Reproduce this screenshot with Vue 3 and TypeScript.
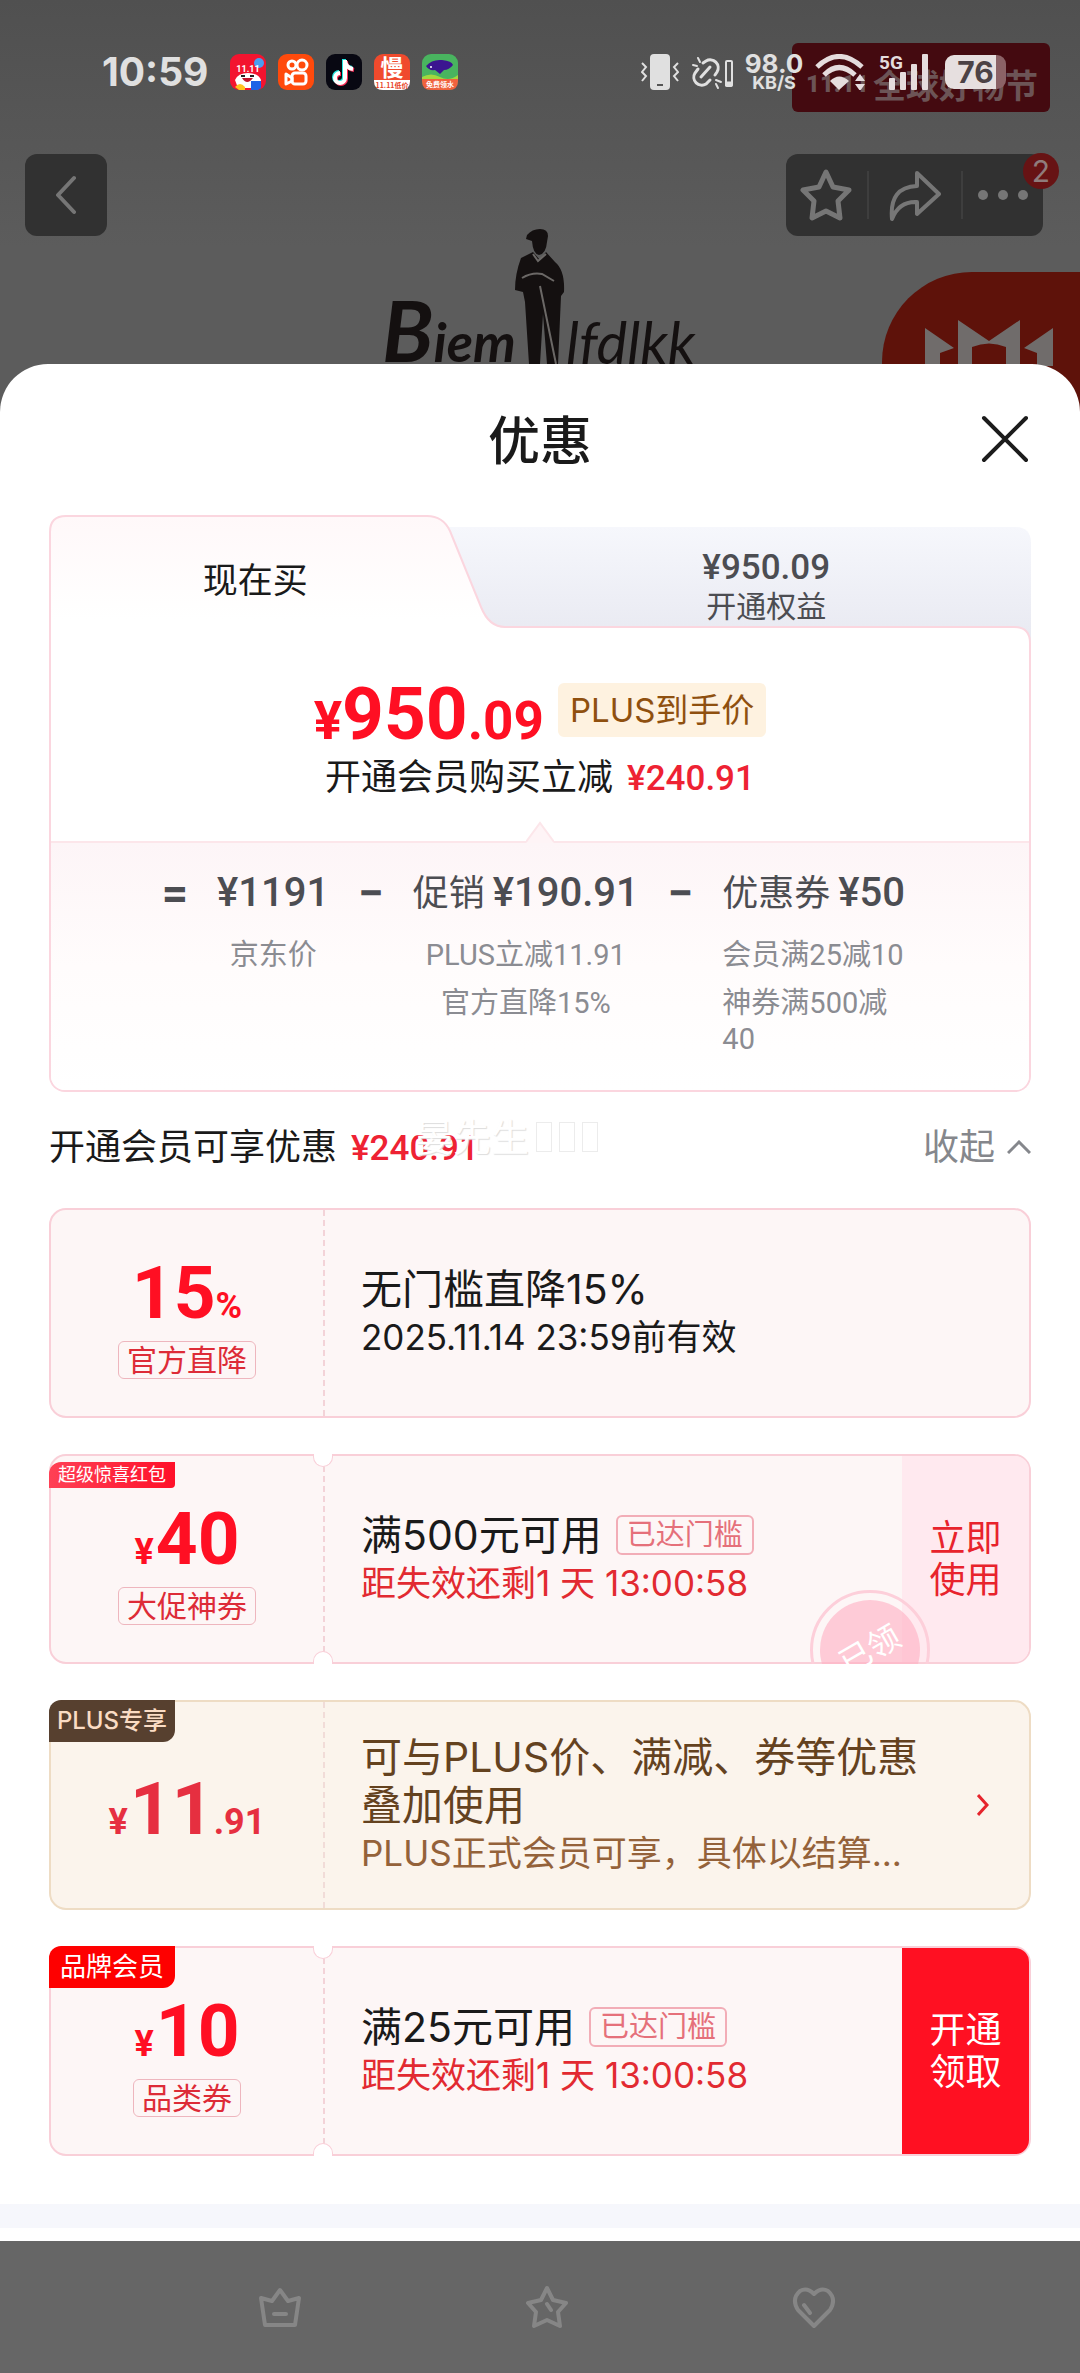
<script setup lang="ts">
import { ref } from 'vue'

interface Coupon {
  id: string
  theme: 'pink' | 'gold'
  corner?: { text: string; kind: 'gift' | 'plus' | 'brand' }
  prefix?: string
  amount: string
  suffix?: string
  tag?: string
  title: string
  reached?: boolean
  note: string
  noteRed?: boolean
  notched?: boolean
  action?: { lines: [string, string]; solid: boolean }
  claimed?: boolean
  arrow?: boolean
}

interface Term {
  label?: string
  price: string
  details: string[]
}

const tab = ref<'now' | 'member'>('now')

const terms: Term[] = [
  { price: '¥1191', details: ['京东价'] },
  { label: '促销', price: '¥190.91', details: ['PLUS立减11.91', '官方直降15%'] },
  { label: '优惠券', price: '¥50', details: ['会员满25减10', '神券满500减40'] },
]

const coupons: Coupon[] = [
  {
    id: 'direct',
    theme: 'pink',
    amount: '15',
    suffix: '%',
    tag: '官方直降',
    title: '无门槛直降15%',
    note: '2025.11.14 23:59前有效',
  },
  {
    id: 'super',
    theme: 'pink',
    corner: { text: '超级惊喜红包', kind: 'gift' },
    prefix: '¥',
    amount: '40',
    tag: '大促神券',
    title: '满500元可用',
    reached: true,
    note: '距失效还剩1 天 13:00:58',
    noteRed: true,
    notched: true,
    action: { lines: ['立即', '使用'], solid: false },
    claimed: true,
  },
  {
    id: 'plus',
    theme: 'gold',
    corner: { text: 'PLUS专享', kind: 'plus' },
    prefix: '¥',
    amount: '11',
    suffix: '.91',
    title: '可与PLUS价、满减、券等优惠叠加使用',
    note: 'PLUS正式会员可享，具体以结算...',
    arrow: true,
  },
  {
    id: 'brand',
    theme: 'pink',
    corner: { text: '品牌会员', kind: 'brand' },
    prefix: '¥',
    amount: '10',
    tag: '品类券',
    title: '满25元可用',
    reached: true,
    note: '距失效还剩1 天 13:00:58',
    noteRed: true,
    notched: true,
    action: { lines: ['开通', '领取'], solid: true },
  },
]
</script>

<template>
  <div class="page" lang="zh-CN">
    <header class="hero">
      <div class="banner"><b>11.11</b><span>全球好物节</span></div>
      <div class="blob">
        <svg width="128" height="46" viewBox="0 0 128 46" fill="#706c6b" aria-hidden="true">
          <path d="M0 8 29 28 15 33V46H0Z" />
          <path d="M33 0 64 21 95 0V46H81V27Q64 20 47 27V46H33Z" />
          <path d="M128 8 99 28 112 33V46H128Z" />
        </svg>
      </div>

      <div class="status">
        <span class="clock">10:59</span>
        <div class="apps">
          <svg width="36" height="36" viewBox="0 0 36 36" aria-hidden="true">
            <rect width="36" height="36" rx="9" fill="#f3142f" />
            <circle cx="29" cy="9" r="5" fill="#4a9df0" />
            <path d="M5 26Q8 19 18 19T31 26L29 34H8Z" fill="#fff" />
            <path d="M12 24q5 8 11 0Z" fill="#c0122a" />
            <path d="M11 22h4M20 22h4" stroke="#222" stroke-width="2" />
            <path d="M5 33q5-6 10 0v3H9Z" fill="#ffc31f" />
            <path d="M21 27h10v7l-3 2h-7Z" fill="#1f63e6" />
            <text x="18" y="18" text-anchor="middle" font-family="Roboto" font-weight="700" font-size="9" fill="#fff">11.11</text>
          </svg>
          <svg width="36" height="36" viewBox="0 0 36 36" fill="none" stroke="#fff" stroke-width="3" stroke-linejoin="round" aria-hidden="true">
            <rect width="36" height="36" rx="9" fill="#ff4a0c" stroke="none" />
            <circle cx="14" cy="11" r="4" />
            <circle cx="24" cy="11" r="5" />
            <rect x="14" y="19" width="14" height="11" rx="3" />
            <path d="M14 24 8 20v10l6-3Z" />
          </svg>
          <svg width="36" height="36" viewBox="0 0 36 36" fill="none" stroke-width="4" aria-hidden="true">
            <rect width="36" height="36" rx="9" fill="#080812" />
            <path d="M18 5v18a5 5 0 1 1-5-5M18 6q1 7 8 8" stroke="#25e6e0" />
            <path d="M20 7v18a5 5 0 1 1-5-5M20 8q1 7 8 8" stroke="#fb2c57" />
            <path d="M19 6v18a5 5 0 1 1-5-5M19 7q1 7 8 8" stroke="#fff" />
          </svg>
          <svg width="36" height="36" viewBox="0 0 36 36" aria-hidden="true">
            <rect width="36" height="36" rx="9" fill="#f04a2d" />
            <path d="M0 26h36v1q0 9-9 9H9q-9 0-9-9Z" fill="#fff" />
            <text x="18" y="22" text-anchor="middle" font-family="Noto Sans CJK SC" font-weight="700" font-size="23" fill="#fff">慢</text>
            <text x="18" y="34" text-anchor="middle" font-family="Noto Sans CJK SC" font-weight="700" font-size="7" fill="#e8431f">11.11低价</text>
          </svg>
          <svg width="36" height="36" viewBox="0 0 36 36" aria-hidden="true">
            <rect width="36" height="36" rx="9" fill="#49b45f" />
            <path d="M0 23q9-5 18 0t18-2v6H0Z" fill="#a3d83e" />
            <path d="M0 25h36v2q0 9-9 9H9q-9 0-9-9Z" fill="#f0623e" />
            <path d="M4 12Q10 5 20 6T31 11Q27 16 22 16L18 20 13 16Q7 17 4 12Z" fill="#3b1590" />
            <circle cx="9" cy="13" r="1" fill="#fff" />
            <text x="18" y="33" text-anchor="middle" font-family="Noto Sans CJK SC" font-weight="700" font-size="7" fill="#fff">免费领水</text>
          </svg>
        </div>

        <div class="signals">
          <svg width="38" height="36" viewBox="0 0 38 36" fill="none" stroke="#e0e0e0" stroke-width="2" aria-hidden="true">
            <rect x="9" y="0" width="20" height="36" rx="4" fill="#e0e0e0" stroke="none" />
            <path d="M16 31h6" stroke="#555" />
            <path d="M1 9l4 4-4 5 4 4-4 5M37 9l-4 4 4 5-4 4 4 5" />
          </svg>
          <svg class="link" width="42" height="36" viewBox="0 0 42 36" fill="none" stroke="#e0e0e0" stroke-width="3" stroke-linecap="round" aria-hidden="true">
            <path d="M12 9l3-2a8 8 0 0 1 11 11l-2 3M7 15l-3 4a8 8 0 0 0 11 11l4-4M10 23 19 13" />
            <path d="M2 11l4 1M7 4l2 4M25 30l2 4M25 26l5 2" stroke-width="2" />
            <rect x="35" y="7" width="6" height="25" rx="1" stroke-width="2" />
            <path d="M35 28h6v4h-6Z" fill="#e0e0e0" stroke-width="1" />
          </svg>
          <div class="speed"><b>98.0</b><b class="unit">KB/S</b></div>
          <svg class="wifi" width="52" height="36" viewBox="0 0 52 36" fill="none" stroke="#e5dcdd" stroke-width="5" aria-hidden="true">
            <path d="M2 13Q24-8 47 13M9 21Q24 6 40 21" />
            <path d="M15 27Q24 18 34 27L24 36Z" fill="#e5dcdd" stroke="none" />
            <path d="M45 20l5 7H40ZM45 37l5-7H40Z" fill="#e5dcdd" stroke="none" />
          </svg>
          <svg class="cell" width="50" height="38" viewBox="0 0 50 38" fill="#e5dcdd" aria-hidden="true">
            <text x="0" y="16" font-family="Roboto" font-weight="700" font-size="19">5G</text>
            <rect x="10" y="25" width="6" height="12" rx="1" />
            <rect x="21" y="19" width="6" height="18" rx="1" />
            <rect x="32" y="11" width="6" height="26" rx="1" />
            <rect x="43" y="1" width="6" height="36" rx="1" />
          </svg>
          <div class="battery"><b>76</b></div>
        </div>
      </div>

      <div class="toolbar">
        <button class="tool back" type="button" aria-label="返回">
          <svg width="20" height="40" viewBox="0 0 20 40" fill="none" stroke="#767676" stroke-width="4" stroke-linecap="round" stroke-linejoin="round"><path d="M18 3 2 20 18 37" /></svg>
        </button>
        <div class="tool group">
          <button type="button" aria-label="收藏">
            <svg width="52" height="54" viewBox="0 0 52 54" fill="none" stroke="#767676" stroke-width="5" stroke-linejoin="round"><path d="M26 4 33 19 49 22 38 33 40 50 26 43 12 50 14 33 3 22 19 19Z" /></svg>
          </button>
          <i></i>
          <button class="share" type="button" aria-label="分享">
            <svg width="52" height="52" viewBox="0 0 52 52" fill="none" stroke="#767676" stroke-width="4" stroke-linejoin="round"><path d="M28 4 50 25 28 45V33Q10 32 3 50 0 18 28 17Z" /></svg>
          </button>
          <i></i>
          <button type="button" aria-label="更多">
            <svg width="52" height="12" viewBox="0 0 52 12" fill="#767676"><circle cx="6" cy="6" r="5" /><circle cx="26" cy="6" r="5" /><circle cx="46" cy="6" r="5" /></svg>
          </button>
          <span class="count">2</span>
        </div>
      </div>

      <div class="brand-logo">
        <span class="word"><em>B</em>iem</span>
        <svg width="52" height="136" viewBox="0 0 52 136" fill="#141010" aria-hidden="true">
          <path d="M13 7Q18 1 26 1q8 0 8 7l-1 6q-1 12-8 13-6-1-7-14l-6-2Z" />
          <path d="M19 24 7 30Q1 46 1 62l8 2 2 10 4 62h11l3-50 4 50h11l3-68 3-4q1-22-9-30L32 24l-6 8Z" />
          <path d="M8 50q10-6 20-4l12 7M26 58l16 78M19 26l5 7 8-7" fill="none" stroke="#6b6866" stroke-width="2" />
        </svg>
        <span class="word thin">lfdlkk</span>
      </div>
    </header>

    <main class="sheet">
      <div class="sheet-head">
        <h1>优惠</h1>
        <button class="close" type="button" aria-label="关闭">
          <svg width="48" height="48" viewBox="0 0 48 48" fill="none" stroke="#1c1c1c" stroke-width="4" stroke-linecap="round"><path d="M3 3 45 45M45 3 3 45" /></svg>
        </button>
      </div>

      <section class="price-card">
        <div class="tabs" role="tablist">
          <svg class="tabs-bg" viewBox="0 0 982 130" preserveAspectRatio="none" aria-hidden="true">
            <defs>
              <linearGradient id="tabActive" x1="0" y1="0" x2="0" y2="1">
                <stop offset="0" stop-color="#fff8f9" />
                <stop offset="0.8" stop-color="#fff" />
              </linearGradient>
              <linearGradient id="tabIdle" x1="0" y1="0" x2="0" y2="1">
                <stop offset="0" stop-color="#f6f7fc" />
                <stop offset="0.9" stop-color="#e9eaf2" />
              </linearGradient>
            </defs>
            <path d="M380 12H966Q982 12 982 28V130H380Z" fill="url(#tabIdle)" />
            <path d="M1 131V17Q1 1 17 1H378Q394 1 401 16L432 92Q440 112 456 112H965Q981 112 981 128V131Z" fill="url(#tabActive)" />
            <path d="M1 131V17Q1 1 17 1H378Q394 1 401 16L432 92Q440 112 456 112H965Q981 112 981 128V131" fill="none" stroke="#fbd6df" stroke-width="2" />
          </svg>
          <button class="tab now" type="button" role="tab" :aria-selected="tab === 'now'" @click="tab = 'now'">现在买</button>
          <button class="tab member" type="button" role="tab" :aria-selected="tab === 'member'" @click="tab = 'member'">
            <span class="tab-price">¥950.09</span>
            <span class="tab-label">开通权益</span>
          </button>
        </div>

        <div class="price-body">
          <div class="final">
            <span class="final-price"><small>¥</small>950<small>.09</small></span>
            <span class="plus-tag">PLUS到手价</span>
          </div>
          <p class="saving">开通会员购买立减<b class="num">¥240.91</b></p>
          <div class="calc">
            <svg class="caret" width="28" height="22" viewBox="0 0 28 22" aria-hidden="true">
              <path d="M0 22 14 2 28 22Z" fill="#fef4f6" />
              <path d="M0 21 14 2 28 21" fill="none" stroke="#fce6ea" stroke-width="2" />
            </svg>
            <template v-for="(term, i) in terms" :key="term.price">
              <span class="op">{{ i === 0 ? '=' : '−' }}</span>
              <div class="term" :class="{ last: i === terms.length - 1 }">
                <div class="term-top"><span v-if="term.label">{{ term.label }}</span><b class="num">{{ term.price }}</b></div>
                <div v-for="d in term.details" :key="d" class="term-note">{{ d }}</div>
              </div>
            </template>
          </div>
        </div>
      </section>

      <div class="summary">
        <p>开通会员可享优惠<b class="num">¥240.91</b></p>
        <button type="button">收起<svg width="24" height="14" viewBox="0 0 24 14" fill="none" stroke="#85878c" stroke-width="3"><path d="M1 13 12 2 23 13" /></svg></button>
        <span class="watermark" aria-hidden="true">晏先生<i></i><i></i><i></i></span>
      </div>

      <ul class="coupons">
        <li v-for="c in coupons" :key="c.id" class="coupon" :class="[c.theme, { notched: c.notched }]">
          <div class="worth">
            <div class="amount"><small v-if="c.prefix" class="prefix">{{ c.prefix }}</small><span>{{ c.amount }}</span><small v-if="c.suffix">{{ c.suffix }}</small></div>
            <span v-if="c.tag" class="kind">{{ c.tag }}</span>
          </div>
          <div class="info">
            <div class="title">{{ c.title }}<span v-if="c.reached" class="reached">已达门槛</span></div>
            <div class="note" :class="{ red: c.noteRed }">{{ c.note }}</div>
          </div>
          <button v-if="c.action" class="action" :class="{ solid: c.action.solid }" type="button">
            <span>{{ c.action.lines[0] }}</span><span>{{ c.action.lines[1] }}</span>
          </button>
          <svg v-if="c.arrow" class="arrow" width="12" height="22" viewBox="0 0 12 22" fill="none" stroke="#e6242c" stroke-width="3"><path d="M1 1 10 11 1 21" /></svg>
          <span v-if="c.corner" class="corner" :class="c.corner.kind">{{ c.corner.text }}</span>
          <div v-if="c.claimed" class="seal-clip"><div class="seal"><span>已领</span></div></div>
        </li>
      </ul>

      <div class="band"></div>
    </main>

    <footer class="dock">
      <svg width="44" height="44" viewBox="0 0 44 44" aria-hidden="true"><path d="M22 5 30 16 41 13 37 40H7L3 13 14 16ZM16 29H28" /></svg>
      <svg width="44" height="44" viewBox="0 0 44 44" aria-hidden="true"><path d="M22 3 28 15 41 18 33 27 35 41 22 35 9 41 11 27 3 18 16 15ZM22 19 26 25" /></svg>
      <svg width="44" height="44" viewBox="0 0 44 44" aria-hidden="true"><path d="M22 41 6 25Q-1 14 8 6 15 2 22 9 29 2 36 6 45 14 38 25ZM12 20 18 28" /></svg>
    </footer>
  </div>
</template>

<style>
body {
  background: #666;
}
</style>

<style scoped>
.page {
  --text: Inter, "Noto Sans CJK SC", sans-serif;
  --digits: Roboto, "Noto Sans CJK SC", sans-serif;
  display: flex;
  flex-direction: column;
  min-height: 100vh;
  font-family: var(--text);
  color: #1a1a1a;
}
h1, p, ul {
  margin: 0;
  padding: 0;
}
button {
  margin: 0;
  padding: 0;
  border: 0;
  background: none;
  font: inherit;
  color: inherit;
}
svg {
  display: block;
  flex: none;
}
.num {
  font-family: var(--digits);
  font-weight: 500;
  line-height: 1;
}

/* dimmed product page */
.hero {
  position: relative;
  overflow: hidden;
  padding-bottom: 48px;
  background: linear-gradient(#505050, #5c5c5c 60%);
}
.banner {
  position: absolute;
  top: 43px;
  right: 30px;
  width: 258px;
  height: 69px;
  box-sizing: border-box;
  padding: 12px 12px 0 14px;
  display: flex;
  align-items: center;
  justify-content: space-between;
  border-radius: 6px;
  background: #440a10;
  color: #6c5456;
  font-size: 33px;
  font-weight: 700;
  white-space: nowrap;
}
.banner b {
  font-family: var(--digits);
  font-size: 24px;
}
.blob {
  position: absolute;
  top: 272px;
  right: 0;
  bottom: 0;
  width: 155px;
  padding: 48px 0 0 43px;
  border-radius: 90px 0 0 0;
  background: #5e120a;
}
.status {
  position: relative;
  display: flex;
  align-items: center;
  height: 40px;
  padding: 52px 74px 0 102px;
  color: #e0e0e0;
}
.clock {
  font-size: 39px;
  font-weight: 700;
  line-height: 40px;
}
.apps {
  display: flex;
  gap: 12px;
  margin-left: 22px;
}
.signals {
  display: flex;
  align-items: center;
  margin-left: auto;
}
.link {
  margin-left: 12px;
}
.speed {
  display: flex;
  flex-direction: column;
  align-items: center;
  margin-left: 10px;
  width: 62px;
  font-size: 26px;
  line-height: 22px;
}
.speed .unit {
  font-size: 18px;
  line-height: 16px;
}
.wifi {
  margin-left: 10px;
}
.cell {
  margin-left: 12px;
}
.battery {
  display: flex;
  align-items: center;
  justify-content: center;
  width: 61px;
  height: 34px;
  margin-left: 16px;
  border-radius: 9px;
  background: linear-gradient(90deg, #e6dfdf 51px, #8b6266 51px);
  color: #4c4245;
  font-size: 30px;
}
.toolbar {
  display: flex;
  justify-content: space-between;
  margin-top: 62px;
  padding: 0 37px 0 25px;
}
.tool {
  height: 82px;
  border-radius: 12px;
  background: #313131;
}
.back {
  display: flex;
  align-items: center;
  justify-content: center;
  width: 82px;
}
.group {
  position: relative;
  display: flex;
  align-items: center;
  width: 257px;
}
.group button {
  flex: 1;
  display: flex;
  justify-content: center;
}
.group .share {
  flex: 0 0 92px;
}
.group i {
  width: 2px;
  height: 48px;
  background: #3e3e3e;
}
.count {
  position: absolute;
  top: -1px;
  right: -16px;
  width: 36px;
  height: 36px;
  border-radius: 50%;
  background: #671314;
  color: #8f7c7c;
  font-size: 30px;
  line-height: 36px;
  text-align: center;
}
.brand-logo {
  display: flex;
  align-items: flex-end;
  justify-content: center;
  height: 136px;
  margin-top: -8px;
  color: #141010;
}
.word {
  width: 132px;
  text-align: right;
  font-family: Lato, sans-serif;
  font-size: 54px;
  font-style: italic;
  font-weight: 700;
  line-height: 44px;
  white-space: nowrap;
}
.word em {
  font-size: 84px;
}
.word.thin {
  text-align: left;
  font-size: 58px;
  font-weight: 400;
}

/* sheet */
.sheet {
  position: relative;
  margin-top: -48px;
  padding-top: 48px;
  padding-bottom: 13px;
  border-radius: 48px 48px 0 0;
  background: #fff;
}
.sheet-head {
  position: relative;
  text-align: center;
}
.sheet-head h1 {
  font-size: 52px;
  font-weight: 500;
  line-height: 60px;
}
.close {
  position: absolute;
  top: 3px;
  right: 51px;
}
.price-card {
  margin: 43px 49px 0;
}
.tabs {
  position: relative;
  display: flex;
  align-items: flex-start;
  height: 130px;
}
.tabs-bg {
  position: absolute;
  inset: 0;
  width: 100%;
  height: 100%;
}
.tab {
  position: relative;
  display: flex;
  flex-direction: column;
  align-items: center;
}
.tab.now {
  width: 42%;
  padding-top: 42px;
  font-size: 35px;
  line-height: 46px;
}
.tab.member {
  flex: 1;
  padding: 34px 0 0 40px;
  color: #4c4d52;
  font-size: 30px;
  line-height: 38px;
}
.tab-price {
  font-family: var(--digits);
  font-size: 35px;
  font-weight: 500;
}
.price-body {
  padding-top: 38px;
  border: 2px solid #fbd6df;
  border-top: 0;
  border-radius: 0 0 16px 16px;
}
.final {
  display: flex;
  align-items: flex-start;
  justify-content: center;
  gap: 14px;
  height: 54px;
}
.final-price {
  color: #ff0f23;
  font-family: var(--digits);
  font-size: 73px;
  font-weight: 700;
  line-height: 62px;
}
.final-price small {
  font-size: 53px;
  line-height: 54px;
}
.plus-tag {
  padding: 0 12px;
  border-radius: 6px;
  background: #fef2e0;
  color: #8f500f;
  font-size: 33px;
  line-height: 54px;
}
.saving {
  margin-top: 18px;
  padding-bottom: 42px;
  text-align: center;
  font-size: 36px;
  line-height: 44px;
}
.saving .num,
.summary .num {
  margin-left: 14px;
  color: #ee2233;
  font-size: 35px;
}
.calc {
  position: relative;
  display: flex;
  justify-content: center;
  gap: 29px;
  padding: 26px 6px 33px 0;
  border-top: 2px solid #fce6ea;
  border-radius: 0 0 14px 14px;
  background: linear-gradient(#fdf5f7, #fffcfc 50%, #fff);
  color: #4c4d52;
}
.caret {
  position: absolute;
  top: -22px;
  left: calc(50% - 14px);
}
.op {
  font-family: var(--digits);
  font-size: 46px;
  font-weight: 700;
  line-height: 48px;
}
.term {
  display: flex;
  flex-direction: column;
  align-items: center;
}
.term.last {
  align-items: flex-start;
  width: 190px;
}
.term-top {
  display: flex;
  align-items: center;
  gap: 8px;
  margin-bottom: 8px;
  font-size: 36px;
  line-height: 48px;
  white-space: nowrap;
}
.term-top .num {
  font-size: 40px;
  line-height: 48px;
}
.term-note {
  margin-top: 12px;
  color: #8b8c92;
  font-family: var(--digits);
  font-size: 29px;
  line-height: 36px;
}
.summary {
  position: relative;
  display: flex;
  justify-content: space-between;
  margin: 33px 49px 39px;
  font-size: 36px;
  line-height: 44px;
}
.summary button {
  display: flex;
  align-items: center;
  gap: 12px;
  color: #85878c;
}
.watermark {
  position: absolute;
  top: -10px;
  left: 366px;
  display: flex;
  align-items: center;
  color: #fff;
  font-size: 38px;
  text-shadow: 1px 1px 1px #ddd;
}
.watermark i {
  width: 14px;
  height: 28px;
  margin-left: 7px;
  border: 1px solid #ececec;
}

/* coupons */
.coupons {
  display: flex;
  flex-direction: column;
  gap: 36px;
  margin: 0 49px 48px;
  list-style: none;
}
.coupon {
  --line: #f9cfd8;
  position: relative;
  display: flex;
  min-height: 210px;
  box-sizing: border-box;
  border: 2px solid var(--line);
  border-radius: 17px;
  background: #fdf6f6;
}
.coupon.gold {
  --line: #eedcc4;
  background: #fbf4ec;
}
.worth {
  flex: none;
  display: flex;
  flex-direction: column;
  align-items: center;
  justify-content: center;
  gap: 10px;
  width: 274px;
  box-sizing: border-box;
  padding-top: 8px;
  border-right: 2px dashed #f3d3d8;
}
.amount {
  color: #ff0f23;
  font-family: var(--digits);
  font-size: 73px;
  font-weight: 700;
  line-height: 76px;
}
.amount small {
  font-size: 36px;
  line-height: 36px;
}
.amount .prefix {
  margin-right: 2px;
}
.gold .amount {
  color: #e62f40;
}
.gold .worth {
  border-right-color: #f1dcd8;
}
.kind {
  padding: 0 8px;
  border: 1px solid #eeb6be;
  border-radius: 6px;
  color: #dd2b37;
  font-size: 30px;
  line-height: 36px;
}
.info {
  flex: 1;
  align-self: center;
  min-width: 0;
  padding-left: 36px;
  font-size: 35px;
  line-height: 48px;
}
.title {
  display: flex;
  align-items: center;
  gap: 14px;
  font-size: 41px;
}
.reached {
  padding: 0 9px;
  border: 2px solid #f2adb7;
  border-radius: 6px;
  color: #e5707a;
  font-size: 29px;
  line-height: 36px;
}
.note.red {
  color: #e22a31;
}
.gold .title {
  color: #64421f;
}
.gold .note {
  color: #94623a;
}
.action {
  flex: none;
  display: flex;
  flex-direction: column;
  align-items: center;
  justify-content: center;
  width: 127px;
  border-radius: 0 14px 14px 0;
  background: #ffe9ef;
  color: #e8232c;
  font-size: 36px;
  line-height: 42px;
}
.action.solid {
  background: #ff1022;
  color: #fff;
}
.arrow {
  align-self: center;
  margin: 0 40px 0 24px;
}
.notched::before,
.notched::after {
  content: "";
  position: absolute;
  left: 262px;
  width: 20px;
  height: 13px;
  box-sizing: border-box;
  border: 1px solid var(--line);
  background: #fff;
}
.notched::before {
  top: -2px;
  border-top: 0;
  border-radius: 0 0 10px 10px;
}
.notched::after {
  bottom: -2px;
  border-bottom: 0;
  border-radius: 10px 10px 0 0;
}
.corner {
  position: absolute;
  top: -2px;
  left: -2px;
  width: 126px;
  border-radius: 12px 0 12px 0;
  color: #fff;
  font-size: 26px;
  line-height: 42px;
  text-align: center;
}
.corner.gift {
  top: 6px;
  border-radius: 12px 0 4px 0;
  background: linear-gradient(90deg, #ff4055, #ff1029);
  font-size: 18px;
  line-height: 26px;
}
.corner.plus {
  background: #57402f;
  color: #fadcc4;
  font-size: 24px;
  font-weight: 500;
}
.corner.brand {
  background: #fe0000;
}
.seal-clip {
  position: absolute;
  inset: 0 0 -2px;
  overflow: hidden;
  border-radius: 14px;
  pointer-events: none;
}
.seal {
  position: absolute;
  right: 99px;
  bottom: -46px;
  display: flex;
  align-items: center;
  justify-content: center;
  width: 120px;
  height: 120px;
  box-sizing: border-box;
  padding: 7px;
  border: 3px solid #fdcfda;
  border-radius: 50%;
}
.seal span {
  width: 100px;
  border-radius: 50%;
  background: rgba(255, 176, 195, 0.62);
  color: #fff;
  font-size: 32px;
  line-height: 100px;
  text-align: center;
  transform: rotate(-30deg);
}
.band {
  height: 24px;
  background: #f6f7fc;
}

/* dimmed bottom bar */
.dock {
  flex: 1;
  display: flex;
  align-items: center;
  justify-content: space-between;
  min-height: 130px;
  padding: 0 244px 0 258px;
  background: #666;
}
.dock svg {
  fill: none;
  stroke: #868686;
  stroke-width: 4;
  stroke-linejoin: round;
  stroke-linecap: round;
}
</style>
